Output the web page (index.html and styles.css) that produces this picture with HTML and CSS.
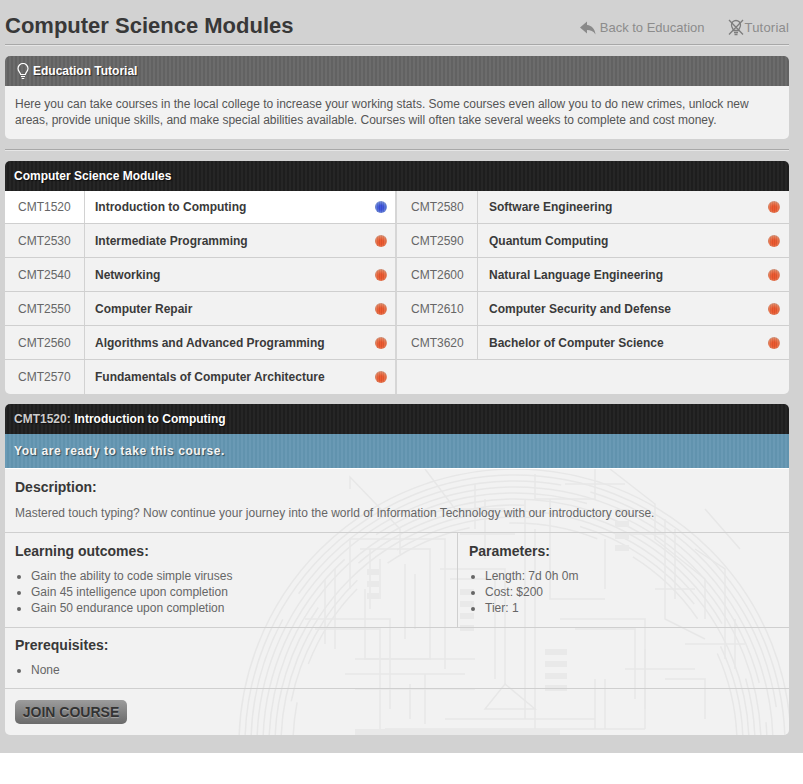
FILE: index.html
```html
<!DOCTYPE html>
<html lang="en">
<head>
<meta charset="utf-8">
<title>Computer Science Modules</title>
<link rel="stylesheet" href="styles.css">
</head>
<body>
<div class="page">
  <header class="top">
    <h1>Computer Science Modules</h1>
    <nav class="links">
      <a class="link">
        <svg class="ico-back" width="16" height="14" viewBox="0 0 16 14"><path d="M7 0.500 0 6.500l7 6V9c3.500 0 6.500 1 8.500 4.500C15 8 12 4.500 7 4z" fill="#8a8a8a"/></svg>
        Back to Education</a>
      <a class="link tight">
        <svg width="16" height="17" viewBox="0 0 16 17"><g fill="none" stroke="#7d7d7d" stroke-width="1.300"><path d="M5.500 11.500C5 9.500 3.500 8.500 3.500 6a4.500 4.500 0 0 1 9 0c0 2.500-1.500 3.500-2 5.500z"/><path d="M6 13.500h4M6.500 15.500h3M1 1l14 14.500M15 1 1 15.500"/></g></svg>
        Tutorial</a>
    </nav>
  </header>

  <section class="panel tutorial">
    <h2 class="bar bar-grey">
      <svg width="14" height="17" viewBox="0 0 14 17"><g fill="none" stroke="#fff" stroke-width="1.200"><path d="M4.700 11.500C4.300 9.500 2 8.200 2 5.500a5 5 0 0 1 10 0c0 2.700-2.300 4-2.700 6z"/><path d="M5 13.500h4M5.700 15.500h2.600"/></g></svg>
      Education Tutorial</h2>
    <p class="tutorial-text">Here you can take courses in the local college to increase your working stats. Some courses even allow you to do new crimes, unlock new areas, provide unique skills, and make special abilities available. Courses will often take several weeks to complete and cost money.</p>
  </section>

  <hr class="rule">

  <section class="panel modules">
    <h2 class="bar bar-dark">Computer Science Modules</h2>
    <ul class="module-grid">
      <li class="module current"><span class="code">CMT1520</span><span class="name">Introduction to Computing</span><i class="dot blue"></i></li>
      <li class="module"><span class="code">CMT2530</span><span class="name">Intermediate Programming</span><i class="dot"></i></li>
      <li class="module"><span class="code">CMT2540</span><span class="name">Networking</span><i class="dot"></i></li>
      <li class="module"><span class="code">CMT2550</span><span class="name">Computer Repair</span><i class="dot"></i></li>
      <li class="module"><span class="code">CMT2560</span><span class="name">Algorithms and Advanced Programming</span><i class="dot"></i></li>
      <li class="module last"><span class="code">CMT2570</span><span class="name">Fundamentals of Computer Architecture</span><i class="dot"></i></li>
      <li class="module"><span class="code">CMT2580</span><span class="name">Software Engineering</span><i class="dot"></i></li>
      <li class="module"><span class="code">CMT2590</span><span class="name">Quantum Computing</span><i class="dot"></i></li>
      <li class="module"><span class="code">CMT2600</span><span class="name">Natural Language Engineering</span><i class="dot"></i></li>
      <li class="module"><span class="code">CMT2610</span><span class="name">Computer Security and Defense</span><i class="dot"></i></li>
      <li class="module"><span class="code">CMT3620</span><span class="name">Bachelor of Computer Science</span><i class="dot"></i></li>
    </ul>
  </section>

  <section class="panel detail">
    <svg class="circuit" width="784" height="266" viewBox="0 0 784 266" aria-hidden="true">
      <g fill="none" stroke="#e7e7e7" stroke-width="1.500">
        <circle cx="510" cy="276" r="276"/><circle cx="510" cy="276" r="270"/><circle cx="510" cy="276" r="264" stroke-dasharray="300 30"/>
        <circle cx="510" cy="276" r="258"/><circle cx="510" cy="276" r="252" stroke-dasharray="220 40"/><circle cx="510" cy="276" r="246"/>
        <circle cx="510" cy="276" r="240" stroke-dasharray="180 60"/><circle cx="510" cy="276" r="234"/><circle cx="510" cy="276" r="228" stroke-dasharray="140 50"/>
        <circle cx="510" cy="276" r="222" stroke-dasharray="90 40"/>
        <path d="M345 20 V8 L395 60 V85 M420 0 L450 40 H500 M530 5 V30 H590 V0 M605 0 L650 35 V70 L700 110 V150"/>
        <path d="M345 120 V70 H440 V200 M355 80 H425 V190 H360 V120 M435 100 H500 V215 M445 110 H490 V210 M300 150 H385 V240 M310 160 H375 V260"/>
        <path d="M520 30 V250 M530 60 V260 M545 30 V130 H600 M555 150 H640 V240 M570 160 H630 V230 M660 50 V150 L700 170 M670 60 V130 M690 80 L720 100 V190 M730 150 V200"/>
        <path d="M365 80 V140 M375 90 V130 M600 70 V120 M610 65 H660 M620 200 H690 M640 180 V260 M350 190 H470 M340 205 H460 M350 220 H470 M480 240 L500 215 L530 240 Z"/>
        <path d="M590 210 V260 M600 210 V260 M440 250 H590 M380 260 H640 M330 100 V180 M320 110 V175 M400 95 V170 M410 105 V160 M560 15 H620 M470 15 V60 M480 30 V90 M455 65 H510 M700 40 L735 80 M680 175 H740 M650 120 H690 M660 210 H700 V250 M420 205 V255 M405 215 V250"/>
      </g>
      <g fill="#e9e9e9">
        <rect x="362" y="100" width="12" height="6"/><rect x="362" y="112" width="12" height="6"/><rect x="362" y="124" width="12" height="6"/>
        <rect x="610" y="40" width="14" height="6"/><rect x="610" y="52" width="14" height="6"/><rect x="610" y="64" width="14" height="6"/><rect x="610" y="76" width="14" height="6"/>
        <rect x="540" y="180" width="22" height="6"/><rect x="540" y="192" width="22" height="6"/><rect x="540" y="204" width="22" height="6"/><rect x="540" y="216" width="22" height="6"/>
        <rect x="455" y="120" width="14" height="6"/><rect x="455" y="132" width="14" height="6"/><rect x="455" y="144" width="14" height="6"/><rect x="455" y="156" width="14" height="6"/>
        <rect x="350" y="260" width="205" height="6"/>
      </g>
    </svg>
    <h2 class="bar bar-dark detail-title"><span class="dim">CMT1520:</span> Introduction to Computing</h2>
    <div class="banner">You are ready to take this course.</div>
    <div class="block desc">
      <h3>Description:</h3>
      <p>Mastered touch typing? Now continue your journey into the world of Information Technology with our introductory course.</p>
    </div>
    <div class="split">
      <div class="block outcomes">
        <h3>Learning outcomes:</h3>
        <ul>
          <li>Gain the ability to code simple viruses</li>
          <li>Gain 45 intelligence upon completion</li>
          <li>Gain 50 endurance upon completion</li>
        </ul>
      </div>
      <div class="block params">
        <h3>Parameters:</h3>
        <ul>
          <li>Length: 7d 0h 0m</li>
          <li>Cost: $200</li>
          <li>Tier: 1</li>
        </ul>
      </div>
    </div>
    <div class="block prereq">
      <h3>Prerequisites:</h3>
      <ul><li>None</li></ul>
    </div>
    <div class="actions"><button class="join" type="button">JOIN COURSE</button></div>
  </section>
</div>
</body>
</html>
```
FILE: styles.css
```css
* { box-sizing: border-box; }
html, body { margin: 0; padding: 0; background: #fff; }
body { font-family: "Liberation Sans", Arial, sans-serif; font-size: 12px; color: #666; }
.page { height: 753px; padding: 0 14px 0 5px; background: #d2d2d2; overflow: hidden; }
.top { height: 45px; display: flex; justify-content: space-between; align-items: center; padding-top: 8px; border-bottom: 1px solid #a8a8a8; box-shadow: 0 1px 0 #e6e6e6; }
h1 { margin: 0; font-size: 22px; font-weight: 700; color: #383838; }
.links { display: flex; gap: 23px; padding-top: 3px; }
.link { display: flex; align-items: center; gap: 4px; color: #8c8c8c; font-size: 13px; }
.link.tight { gap: 1px; letter-spacing: 0.2px; }
.panel { border-radius: 5px; background: #f2f2f2; overflow: hidden; position: relative; }
.tutorial { margin-top: 11px; height: 83px; }
.bar { position: relative; z-index: 1; margin: 0; height: 30px; padding-left: 9px; display: flex; align-items: center; gap: 3px; font-size: 12px; font-weight: 700; color: #fff; text-shadow: 1px 1px 1px rgba(0,0,0,.6); }
.bar-grey { padding-left: 11px; background: repeating-linear-gradient(90deg, #6c6c6c 0 2px, #626262 2px 4px); }
.bar-dark { background: repeating-linear-gradient(90deg, #262626 0 2px, #1e1e1e 2px 4px); }
.tutorial-text { margin: 0; padding: 10px 10px 0; font-size: 12px; line-height: 16px; color: #555; }
.rule { margin: 10px 0 11px; height: 1px; border: 0; background: #a8a8a8; box-shadow: 0 1px 0 #e6e6e6; }
.modules { height: 233px; }
.module-grid { margin: -1px 0 0; padding: 0; list-style: none; display: grid; grid-template-columns: 392px 392px; grid-template-rows: repeat(6, 34px); grid-auto-flow: column; }
.module { display: flex; align-items: center; border-bottom: 1px solid #cfcfcf; border-right: 2px solid #d6d6d6; }
.module.last { border-bottom: 0; }
.module:nth-child(n+7) { border-right: 0; }
.module.current { background: #fff; }
.code { flex: 0 0 80px; height: 100%; display: flex; align-items: center; padding-left: 13px; color: #666; border-right: 1px solid #d2d2d2; }
.name { flex: 1; padding-left: 10px; font-weight: 700; color: #3a3a3a; }
.dot { flex: none; width: 12px; height: 12px; margin-right: 8px; border-radius: 50%; background: repeating-linear-gradient(90deg, rgba(0,0,0,.08) 0 1px, transparent 1px 2px), radial-gradient(circle at 50% 60%, #ee5a30 0 25%, #e8835e 60%, #c9a596 85%, #d5c6bf 100%); }
.dot.blue { background: repeating-linear-gradient(90deg, rgba(0,0,0,.1) 0 1px, transparent 1px 2px), radial-gradient(circle at 50% 55%, #3f55e0 0 25%, #6c88de 60%, #99aadb 85%, #b8c2de 100%); }
.module:nth-child(n+7) .dot { margin-right: 9px; }
.module:nth-child(n+7) .code { flex-basis: 81px; padding-left: 14px; }
.module:nth-child(n+7) .name { padding-left: 11px; }
.detail { margin-top: 10px; height: 331px; }
.circuit { position: absolute; left: 0; top: 65px; }
.detail > *:not(.circuit) { position: relative; }
.dim { color: #ccc; }
.detail-title { gap: 0.3em; }
.banner { height: 35px; padding-left: 9px; display: flex; align-items: center; background: repeating-linear-gradient(90deg, #6a9ab5 0 2px, #6193ae 2px 4px); border-bottom: 1px solid #fff; color: #f4f4f4; font-size: 12px; font-weight: 700; letter-spacing: 0.58px; text-shadow: 1px 1px 1px rgba(0,0,0,.5); }
.block h3 { margin: 0; font-size: 14px; font-weight: 700; color: #383838; }
.block ul { margin: 0; padding: 0 0 0 16px; line-height: 16px; list-style: disc; }
.block p { margin: 10px 0 0; line-height: 16px; color: #666; }
.desc { height: 64px; padding: 10px 10px 0; border-bottom: 1px solid #cfcfcf; }
.split { display: flex; height: 95px; border-bottom: 1px solid #cfcfcf; }
.split ul { margin-top: 9px; }
.outcomes { flex: 0 0 453px; padding: 10px 10px 0; border-right: 1px solid #cfcfcf; }
.params { flex: 1; padding: 10px 11px 0; }
.prereq { height: 61px; padding: 9px 10px 0; border-bottom: 1px solid #cfcfcf; }
.prereq ul { margin-top: 9px; }
.actions { padding: 11px 10px 0; }
.join { display: block; width: 112px; height: 24px; padding: 0; border: 0; border-radius: 5px; background: linear-gradient(#9c9c9c, #6a6a6a); color: #333; font-family: "Liberation Sans", Arial, sans-serif; font-size: 14px; font-weight: 700; text-shadow: 0 1px 1px rgba(255,255,255,.35); }
```
